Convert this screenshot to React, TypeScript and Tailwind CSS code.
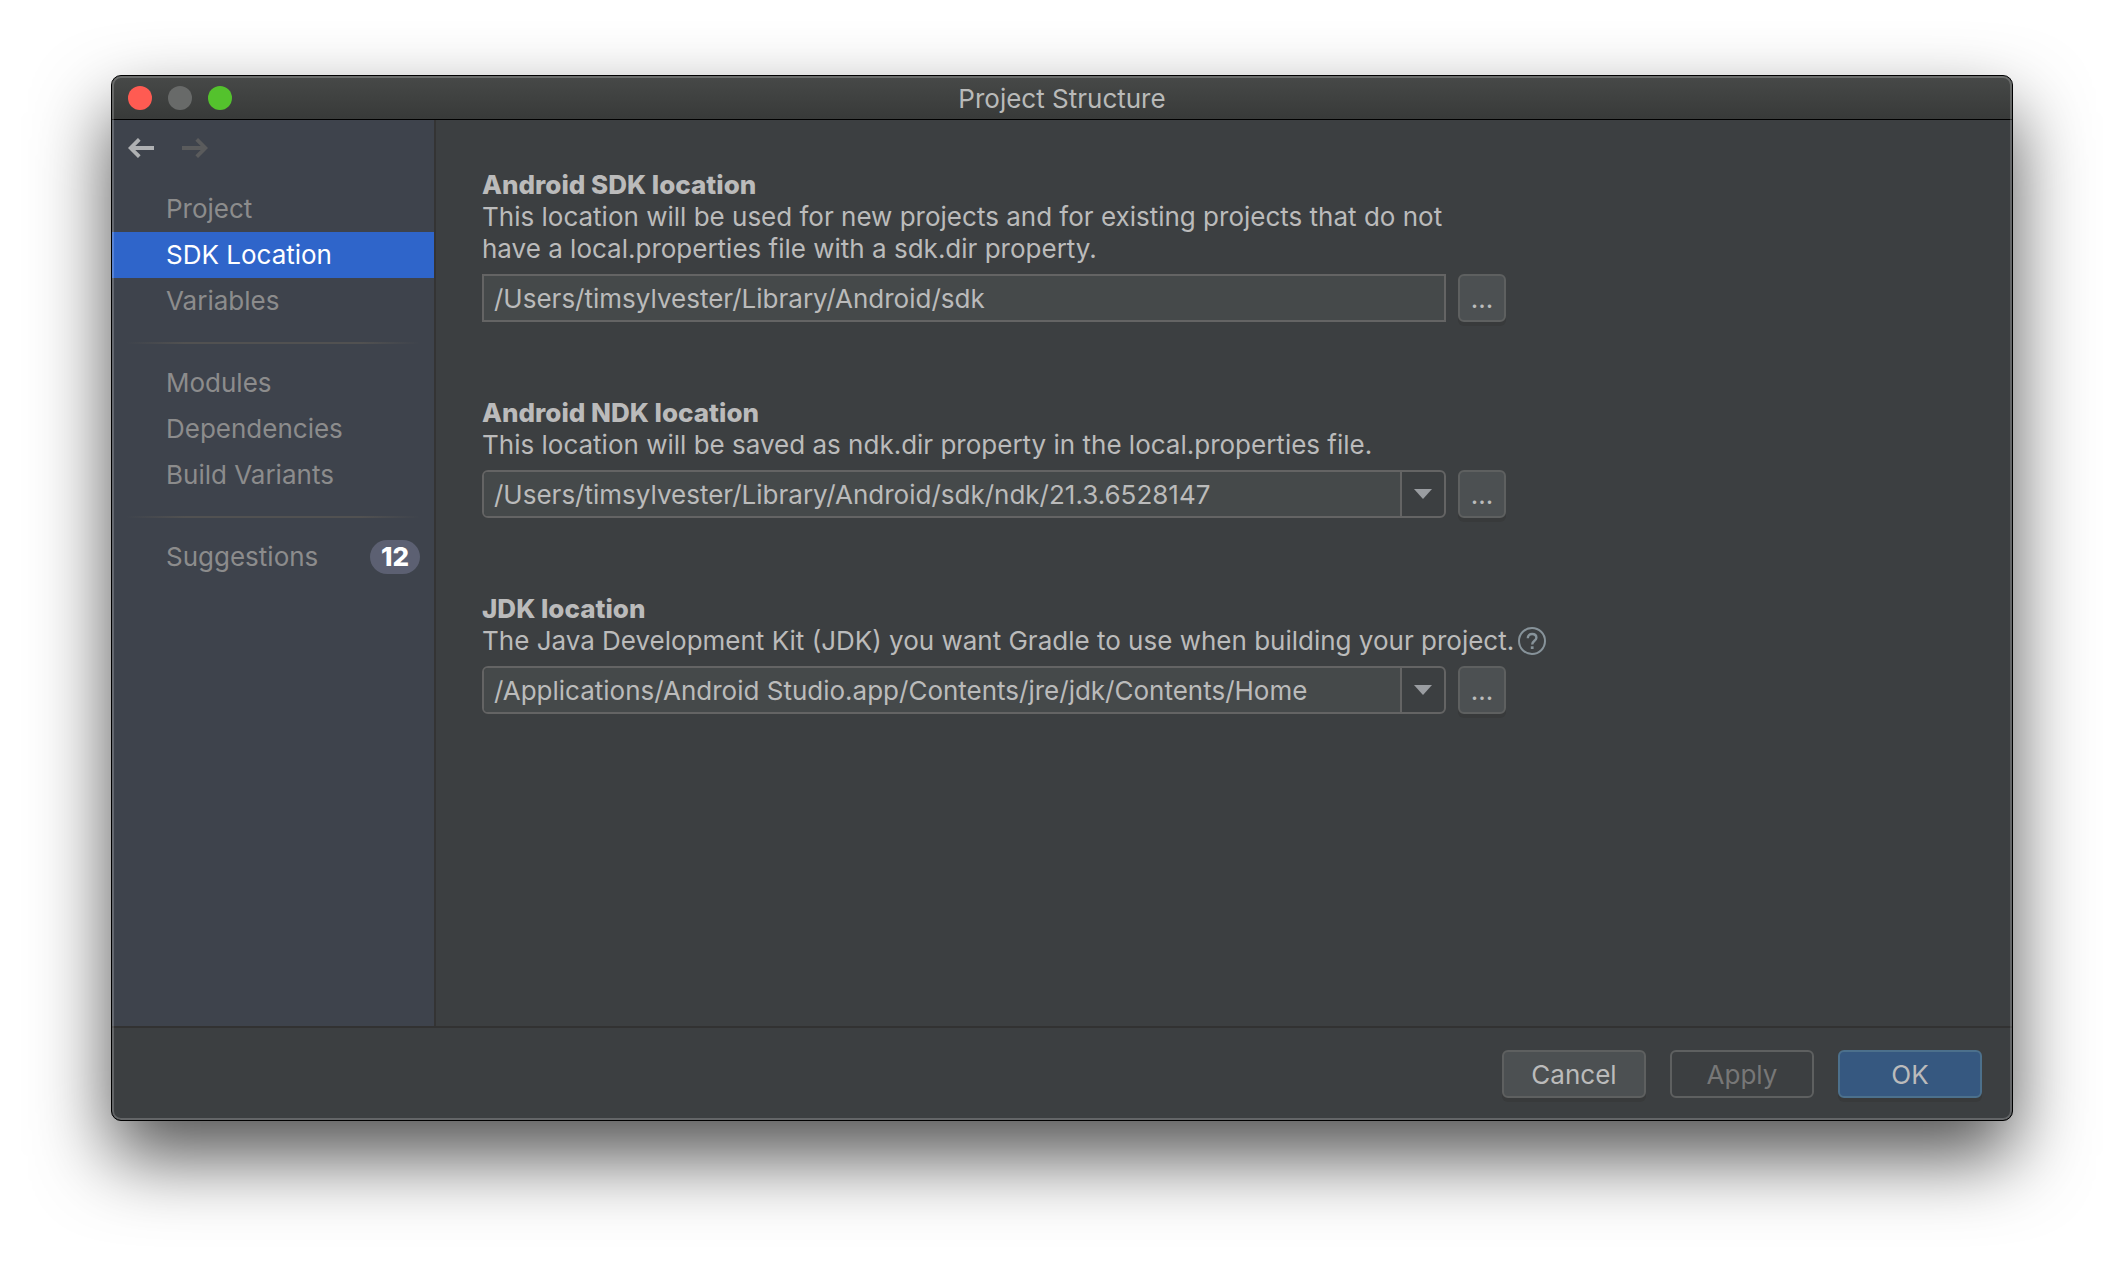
import { useState } from "react";

function ArrowIcon({ className }: { className: string }) {
  return (
    <svg viewBox="0 0 26 20" className={className} fill="none" stroke="currentColor">
      <path d="M26 10H4M11.3 1.3L2.6 10L11.3 18.7" strokeWidth="3.8" />
    </svg>
  );
}

function NavItem({ label, selected, badge }: { label: string; selected?: boolean; badge?: string }) {
  return (
    <li>
      <a
        href="#"
        aria-current={selected ? "page" : undefined}
        className={
          selected
            ? "flex h-[46px] items-center justify-between bg-[#2f65ca] pr-[14px] pl-[54px] text-white"
            : "flex h-[46px] items-center justify-between pr-[14px] pl-[54px] text-[#8c8c8c]"
        }
      >
        {label}
        {badge && (
          <span className="flex h-[34px] w-[50px] items-center justify-center rounded-full bg-[#5c6072] font-extrabold text-white">
            {badge}
          </span>
        )}
      </a>
    </li>
  );
}

function NavDivider() {
  return (
    <li
      role="separator"
      className="mx-[14px] mt-[18px] mb-4 h-[2px] bg-[linear-gradient(to_right,transparent,#515151_20%,#515151_80%,transparent)]"
    />
  );
}

function BrowseButton({ label }: { label: string }) {
  return (
    <button
      type="button"
      aria-label={label}
      className="h-12 w-12 shrink-0 rounded-md border-2 border-[#5e6060] bg-[#4c5052] pt-[2px] text-center shadow-[0_4px_0_#383a3b]"
    >
      ...
    </button>
  );
}

interface LocationProps {
  id: string;
  title: string;
  description: string;
  value: string;
  combo?: boolean;
  help?: boolean;
}

function LocationField({ id, title, description, value, combo, help }: LocationProps) {
  const [path, setPath] = useState(value);
  return (
    <section>
      <label htmlFor={id} className="block font-extrabold">
        {title}
      </label>
      <div className="flex items-center">
        <p className="whitespace-pre-line">{description}</p>
        {help && (
          <button type="button" aria-label="Help" className="ml-1 text-[#87939a]">
            <svg viewBox="0 0 28 28" className="h-7 w-7" fill="none" stroke="currentColor" strokeWidth="2">
              <circle cx="14" cy="14" r="13" />
              <path
                d="M9.8 11.2C9.8 8.6 11.6 7 14.1 7S18.4 8.5 18.4 10.8C18.4 13.6 14.2 14 14.2 17.4"
                strokeWidth="2.4"
              />
              <path d="M14.2 19.3V22" strokeWidth="2.8" />
            </svg>
          </button>
        )}
      </div>
      <div className="mt-[9px] flex max-w-[1024px] gap-3">
        <div
          className={
            combo
              ? "flex h-12 min-w-0 flex-1 overflow-hidden rounded-md border-2 border-[#646464]"
              : "flex h-12 min-w-0 flex-1 border-2 border-[#646464]"
          }
        >
          <input
            id={id}
            type="text"
            value={path}
            onChange={(e) => setPath(e.target.value)}
            className="min-w-0 flex-1 bg-[#45494a] px-[10px] pt-[2px] outline-none"
          />
          {combo && (
            <button
              type="button"
              aria-label="Show known locations"
              className="flex w-[44px] items-center justify-center border-l-2 border-[#646464] text-[#9a9da1]"
            >
              <svg viewBox="0 0 18 10" className="h-[10px] w-[18px]" fill="currentColor">
                <path d="M0 0H18L9 10Z" />
              </svg>
            </button>
          )}
        </div>
        <BrowseButton label={`Browse for ${title}`} />
      </div>
    </section>
  );
}

export default function App() {
  return (
    <div className="flex min-h-screen bg-white px-[111px] pt-[75px] pb-[147px] font-['Inter','Liberation_Sans',sans-serif] text-[26px] leading-8 text-[#bbbbbb]">
      <div className="relative flex min-w-0 flex-1 flex-col overflow-hidden rounded-[10px] border border-black bg-[#3c3f41] shadow-[0_36px_76px_rgba(0,0,0,0.68)]">
        <header className="grid h-11 grid-cols-[1fr_auto_1fr] items-center border-b border-black bg-linear-to-b from-[#474948] to-[#383a39] px-4">
          <div className="flex gap-4">
            <button type="button" aria-label="Close" className="h-6 w-6 rounded-full bg-[#ff5b52]" />
            <button type="button" aria-label="Minimize" className="h-6 w-6 rounded-full bg-[#686a69]" />
            <button type="button" aria-label="Zoom" className="h-6 w-6 rounded-full bg-[#54c22d]" />
          </div>
          <h1 className="pt-[2px] text-[#b9bab9]">Project Structure</h1>
        </header>

        <div className="flex flex-1">
          <nav className="w-[324px] shrink-0 border-r-2 border-[#343434] bg-[#3e434c]">
            <div className="flex h-[66px] gap-7 px-4 pt-[18px]">
              <button type="button" aria-label="Back" className="h-5 text-[#afb1b3]">
                <ArrowIcon className="h-5 w-[26px]" />
              </button>
              <button type="button" aria-label="Forward" disabled className="h-5 text-[#5a5b5c]">
                <ArrowIcon className="h-5 w-[26px] rotate-180" />
              </button>
            </div>
            <ul>
              <NavItem label="Project" />
              <NavItem label="SDK Location" selected />
              <NavItem label="Variables" />
              <NavDivider />
              <NavItem label="Modules" />
              <NavItem label="Dependencies" />
              <NavItem label="Build Variants" />
              <NavDivider />
              <NavItem label="Suggestions" badge="12" />
            </ul>
          </nav>

          <main className="flex min-w-0 flex-1 flex-col gap-[75px] px-[46px] pt-[49px]">
            <LocationField
              id="sdk"
              title="Android SDK location"
              description={
                "This location will be used for new projects and for existing projects that do not\nhave a local.properties file with a sdk.dir property."
              }
              value="/Users/timsylvester/Library/Android/sdk"
            />
            <LocationField
              id="ndk"
              title="Android NDK location"
              description="This location will be saved as ndk.dir property in the local.properties file."
              value="/Users/timsylvester/Library/Android/sdk/ndk/21.3.6528147"
              combo
            />
            <LocationField
              id="jdk"
              title="JDK location"
              description="The Java Development Kit (JDK) you want Gradle to use when building your project."
              value="/Applications/Android Studio.app/Contents/jre/jdk/Contents/Home"
              combo
              help
            />
          </main>
        </div>

        <footer className="flex justify-end gap-6 border-t-2 border-[#323232] px-[30px] py-[22px]">
          <button
            type="button"
            className="h-12 w-36 rounded-md border-2 border-[#5e6060] bg-[#4c5052] pt-[2px] shadow-[0_4px_0_#383a3b]"
          >
            Cancel
          </button>
          <button
            type="button"
            disabled
            className="h-12 w-36 rounded-md border-2 border-[#5e6060] pt-[2px] text-[#777777]"
          >
            Apply
          </button>
          <button
            type="button"
            className="h-12 w-36 rounded-md border-2 border-[#4c708c] bg-[#365880] pt-[2px] shadow-[0_4px_0_#383a3b]"
          >
            OK
          </button>
        </footer>
        <div className="pointer-events-none absolute inset-0 rounded-[9px] border-2 border-white/20" />
      </div>
    </div>
  );
}
